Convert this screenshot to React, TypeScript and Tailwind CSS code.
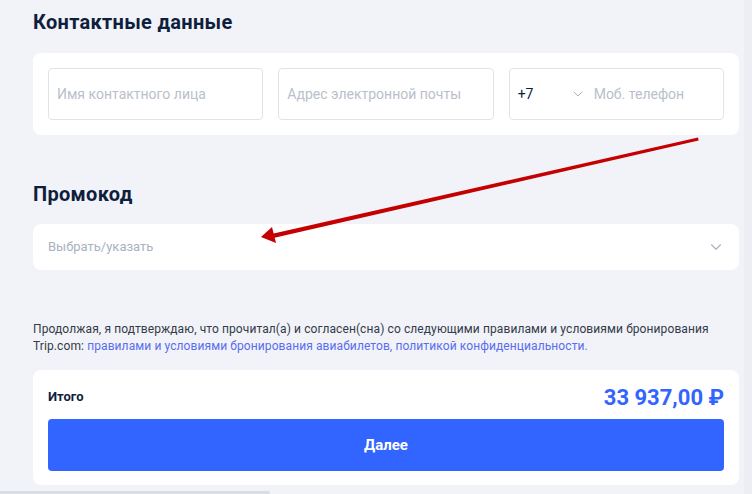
import { ChevronDown } from "lucide-react"

function Field({ placeholder }: { placeholder: string }) {
  return (
    <div className="flex h-[52px] w-[216px] items-center rounded-[4px] border border-[#dfe3ea] px-[8px] text-[14px] text-[#b9c0cc]">
      {placeholder}
    </div>
  )
}

export default function App() {
  return (
    <div
      className="relative h-[494px] w-[752px] overflow-hidden bg-[#f1f3f8] text-[#0f1e3d]"
      style={{ fontFamily: "Roboto, 'Noto Sans', sans-serif" }}
    >
      <div className="w-[739px] pl-[33px]">
        {/* Contacts */}
        <h2 className="pt-[8px] text-[20px] font-bold leading-[28px] tracking-[0.3px]">Контактные данные</h2>
        <div className="mt-[17px] flex gap-[15px] rounded-[8px] bg-white p-[15px]">
          <Field placeholder="Имя контактного лица" />
          <Field placeholder="Адрес электронной почты" />
          <div className="flex h-[52px] w-[216px] items-center rounded-[4px] border border-[#dfe3ea] px-[8px] text-[14px]">
            <span className="w-[52px] text-[#0f1e3d]">+7</span>
            <ChevronDown className="h-[16px] w-[16px] text-[#a9b1be]" strokeWidth={1.5} />
            <span className="ml-[8px] text-[#b9c0cc]">Моб. телефон</span>
          </div>
        </div>

        {/* Promo */}
        <h2 className="mt-[45px] text-[20px] font-bold leading-[28px] tracking-[0.3px]">Промокод</h2>
        <div className="mt-[16px] flex h-[46px] items-center justify-between rounded-[8px] bg-white pl-[15px] pr-[14px]">
          <span className="text-[13px] text-[#a9b1be]">Выбрать/указать</span>
          <ChevronDown className="h-[18px] w-[18px] text-[#a9b1be]" strokeWidth={1.5} />
        </div>

        {/* Consent */}
        <p className="mt-[51px] text-[12px] leading-[17px] tracking-[0.1px] text-[#333a48]">
          Продолжая, я подтверждаю, что прочитал(а) и согласен(сна) со следующими правилами и условиями бронирования
          Trip.com: <span className="text-[#5a6cf0]">правилами и условиями бронирования авиабилетов, политикой конфиденциальности.</span>
        </p>

        {/* Total */}
        <div className="mt-[15px] rounded-[8px] bg-white px-[15px] pb-[14px] pt-[10px]">
          <div className="flex h-[34px] items-center justify-between">
            <span className="text-[13px] font-bold text-[#0f1e3d]">Итого</span>
            <span className="text-[22px] font-bold text-[#3264ff]">33 937,00 ₽</span>
          </div>
          <button className="mt-[5px] flex h-[52px] w-full items-center justify-center rounded-[4px] bg-[#3264ff] text-[15px] font-bold text-white">
            Далее
          </button>
        </div>
      </div>

      {/* right edge shade */}
      <div className="absolute right-0 top-0 h-full w-[8px] bg-[#eceef3]" />
      {/* horizontal scrollbar */}
      <div className="absolute bottom-0 left-0 h-[3px] w-[270px] rounded-r-[2px] bg-[#dadee4]" />

      {/* annotation arrow */}
      <svg className="pointer-events-none absolute left-0 top-0" width="752" height="494" viewBox="0 0 752 494">
        <polygon points="698,137.5 698.6,140.5 269,239 267,235" fill="#c40000" />
        <polygon points="261,237 272,227 276,243" fill="#c40000" />
      </svg>
    </div>
  )
}
